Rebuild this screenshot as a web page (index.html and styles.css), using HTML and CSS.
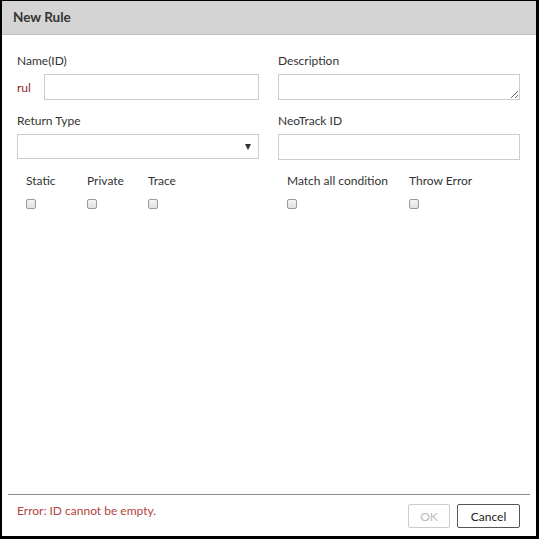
FILE: index.html
```html
<!DOCTYPE html>
<html>
<head>
<meta charset="utf-8">
<link rel="stylesheet" href="styles.css">
</head>
<body>
<div class="dialog">
  <div class="header">New Rule</div>
  <div class="content">
    <div class="grid">
      <div class="field">
        <div class="label">Name(ID)</div>
        <div class="name-row">
          <span class="prefix">rul</span>
          <input class="input" type="text">
        </div>
      </div>
      <div class="field">
        <div class="label">Description</div>
        <textarea class="input textarea"></textarea>
      </div>
      <div class="field">
        <div class="label">Return Type</div>
        <div class="select"><span class="arrow"></span></div>
      </div>
      <div class="field">
        <div class="label">NeoTrack ID</div>
        <input class="input" type="text">
      </div>
      <div class="opts">
        <label class="opt"><span class="opt-label">Static</span><input type="checkbox" class="cb"></label>
        <label class="opt"><span class="opt-label">Private</span><input type="checkbox" class="cb"></label>
        <label class="opt"><span class="opt-label">Trace</span><input type="checkbox" class="cb"></label>
      </div>
      <div class="opts">
        <label class="opt wide"><span class="opt-label">Match all condition</span><input type="checkbox" class="cb"></label>
        <label class="opt"><span class="opt-label">Throw Error</span><input type="checkbox" class="cb"></label>
      </div>
    </div>
  </div>
  <div class="footer">
    <span class="error">Error: ID cannot be empty.</span>
    <div class="buttons">
      <button class="btn" disabled>OK</button>
      <button class="btn primary">Cancel</button>
    </div>
  </div>
</div>
</body>
</html>
```
FILE: styles.css
```css
* { box-sizing: border-box; }
html, body { margin: 0; padding: 0; background: #000; }
body {
  width: 539px;
  height: 539px;
  padding: 1px 3px 3px 2px;
  font-family: Lato, "Liberation Sans", sans-serif;
  font-size: 12px;
  color: #333;
}
.dialog {
  width: 534px;
  height: 535px;
  background: #fff;
  display: flex;
  flex-direction: column;
}
.header {
  height: 34px;
  background: #d4d4d4;
  border-bottom: 1px solid #c0c0c0;
  padding-left: 11px;
  line-height: 33px;
  font-size: 13.5px;
  font-weight: bold;
  color: #333;
}
.content {
  flex: 1;
  padding: 18px 16px 0 15px;
}
.grid {
  display: grid;
  grid-template-columns: 242px 242px;
  column-gap: 19px;
  row-gap: 13px;
}
.label {
  line-height: 16px;
  height: 16px;
  margin-bottom: 5px;
}
.name-row {
  display: flex;
  align-items: center;
}
.prefix {
  width: 27px;
  color: #8e2a2a;
}
.input {
  display: block;
  width: 100%;
  height: 26px;
  border: 1px solid #ccc;
  border-radius: 0;
  margin: 0;
  padding: 0 4px;
  font: inherit;
  outline: none;
}
.name-row .input { flex: 1; width: auto; }
.textarea { height: 26px; resize: vertical; }
.select {
  position: relative;
  height: 25px;
  border: 1px solid #ccc;
  margin-top: 1px;
}
.arrow {
  position: absolute;
  right: 7px;
  top: 9px;
  width: 0;
  height: 0;
  border-left: 3.5px solid transparent;
  border-right: 3.5px solid transparent;
  border-top: 6px solid #333;
}
.opts {
  display: flex;
  padding-left: 9px;
  margin-top: 0;
}
.opt {
  display: flex;
  flex-direction: column;
  width: 61px;
}
.opt.wide { width: 122px; }
.opt-label { line-height: 16px; white-space: nowrap; }
.cb {
  appearance: none;
  -webkit-appearance: none;
  width: 10px;
  height: 10px;
  margin: 10px 0 0 0;
  border: 1px solid #9a9a9a;
  border-radius: 2px;
  background: linear-gradient(#f4f4f4, #e2e2e2);
}
.footer {
  height: 42px;
  margin: 0 6px;
  border-top: 1px solid #8c8c8c;
  display: flex;
  align-items: center;
  justify-content: space-between;
  padding: 0 10px 1px 9px;
}
.error {
  color: #b3433d;
  margin-top: -10px;
}
.buttons {
  display: flex;
  gap: 7px;
  margin-top: 2px;
}
.btn {
  height: 24px;
  padding: 0 13px;
  font: inherit;
  background: #fff;
  border: 1px solid #555;
  border-radius: 2px;
  color: #222;
}
.btn[disabled] {
  border-color: #ccc;
  color: #bbb;
  width: 42px;
  padding: 0;
}
.btn.primary { width: 63px; padding: 0; }
```
